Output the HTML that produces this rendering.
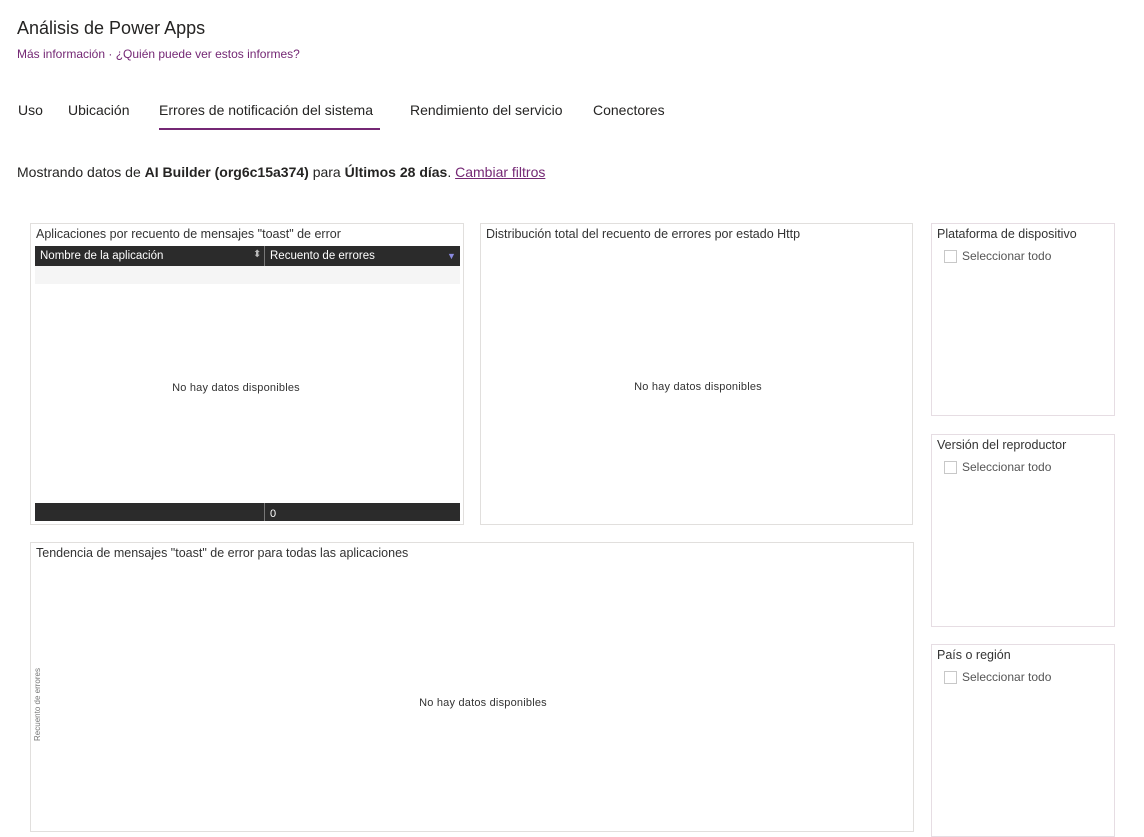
<!DOCTYPE html>
<html><head><meta charset="utf-8"><style>
body{margin:0;width:1144px;height:813px;overflow:hidden;background:#fff;font-family:"Liberation Sans",sans-serif;color:#252423;position:relative}
.a{position:absolute;white-space:nowrap}
.box{position:absolute;border:1px solid #e1dfdd;box-sizing:border-box}
.rb{position:absolute;border:1px solid #e6dde3;box-sizing:border-box}
.t{position:absolute;left:5px;top:3px;font-size:12.5px;color:#333}
.nd{position:absolute;font-size:11px;color:#333;transform:translateX(-50%);letter-spacing:0.2px}
.cb{position:absolute;left:12px;top:26px;width:11px;height:11px;border:1px solid #c8c8c8}
.cl{position:absolute;left:30px;top:25px;font-size:12px;color:#555}
</style></head><body>
<div class="a" style="left:17px;top:18px;font-size:18px;color:#252423">Análisis de Power Apps</div>
<div class="a" style="left:17px;top:47px;font-size:12px;color:#742774">Más información · ¿Quién puede ver estos informes?</div>
<div class="a" style="left:18px;top:102px;font-size:14px">Uso</div>
<div class="a" style="left:68px;top:102px;font-size:14px">Ubicación</div>
<div class="a" style="left:159px;top:102px;font-size:14px">Errores de notificación del sistema</div>
<div class="a" style="left:159px;top:128px;width:221px;height:2px;background:#742774"></div>
<div class="a" style="left:410px;top:102px;font-size:14px">Rendimiento del servicio</div>
<div class="a" style="left:593px;top:102px;font-size:14px">Conectores</div>
<div class="a" style="left:17px;top:164px;font-size:14px">Mostrando datos de <b>AI Builder (org6c15a374)</b> para <b>Últimos 28 días</b>. <span style="color:#742774;text-decoration:underline">Cambiar filtros</span></div>

<div class="box" style="left:30px;top:223px;width:434px;height:302px">
<div class="t">Aplicaciones por recuento de mensajes "toast" de error</div>
<div class="a" style="left:4px;top:22px;width:425px;height:20px;background:#2b2b2b;color:#fff;font-size:11.5px">
<span class="a" style="left:5px;top:4px">Nombre de la aplicación</span>
<span class="a" style="left:218px;top:3px;font-size:10px;color:#bbb">⬍</span>
<span class="a" style="left:229px;top:0;width:1px;height:20px;background:#777"></span>
<span class="a" style="left:235px;top:4px">Recuento de errores</span>
<span class="a" style="left:412px;top:5px;font-size:9px;color:#8a8ae0">▼</span></div>
<div class="a" style="left:4px;top:42px;width:425px;height:18px;background:#f5f5f5"></div>
<div class="nd" style="left:205px;top:158px">No hay datos disponibles</div>
<div class="a" style="left:4px;top:279px;width:425px;height:18px;background:#2b2b2b;color:#fff;font-size:11px">
<span class="a" style="left:229px;top:0;width:1px;height:18px;background:#777"></span>
<span class="a" style="left:235px;top:5px">0</span></div>
</div>

<div class="box" style="left:480px;top:223px;width:433px;height:302px">
<div class="t">Distribución total del recuento de errores por estado Http</div>
<div class="nd" style="left:217px;top:157px">No hay datos disponibles</div>
</div>

<div class="box" style="left:30px;top:542px;width:884px;height:290px">
<div class="t">Tendencia de mensajes "toast" de error para todas las aplicaciones</div>
<div class="nd" style="left:452px;top:154px">No hay datos disponibles</div>
<div class="a" style="left:-30px;top:157px;font-size:8px;color:#777;transform:rotate(-90deg);transform-origin:center">Recuento de errores</div>
</div>

<div class="rb" style="left:931px;top:223px;width:184px;height:193px"><div class="t">Plataforma de dispositivo</div><div class="cb"></div><div class="cl">Seleccionar todo</div></div>
<div class="rb" style="left:931px;top:434px;width:184px;height:193px"><div class="t">Versión del reproductor</div><div class="cb"></div><div class="cl">Seleccionar todo</div></div>
<div class="rb" style="left:931px;top:644px;width:184px;height:193px"><div class="t">País o región</div><div class="cb"></div><div class="cl">Seleccionar todo</div></div>
</body></html>
